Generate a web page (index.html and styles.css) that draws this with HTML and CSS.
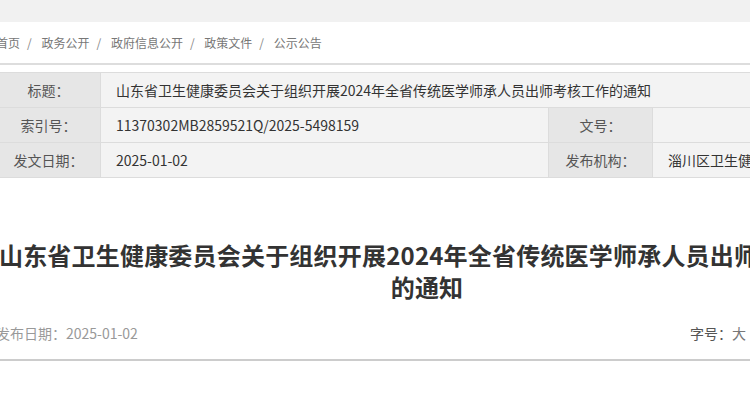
FILE: index.html
```
<!DOCTYPE html>
<html lang="zh-CN">
<head>
    <meta charset="UTF-8">
    <meta name="viewport" content="width=device-width, initial-scale=1.0">
    <title>山东省卫生健康委员会关于组织开展2024年全省传统医学师承人员出师考核工作的通知</title>
    <link rel="stylesheet" href="styles.css">
</head>
<body>
    <div class="top-band"></div>

    <div class="wrap">
        <div class="crumbs">
            <a href="#">首页</a><span class="sep">/</span>
            <a href="#">政务公开</a><span class="sep">/</span>
            <a href="#">政府信息公开</a><span class="sep">/</span>
            <a href="#">政策文件</a><span class="sep">/</span>
            <a href="#">公示公告</a>
        </div>

        <table class="info">
            <colgroup>
                <col class="c-label">
                <col class="c-wide">
                <col class="c-label">
                <col>
            </colgroup>
            <tr>
                <th>标题：</th>
                <td colspan="3">山东省卫生健康委员会关于组织开展2024年全省传统医学师承人员出师考核工作的通知</td>
            </tr>
            <tr>
                <th>索引号：</th>
                <td>11370302MB2859521Q/2025-5498159</td>
                <th>文号：</th>
                <td></td>
            </tr>
            <tr>
                <th>发文日期：</th>
                <td>2025-01-02</td>
                <th>发布机构：</th>
                <td>淄川区卫生健康局</td>
            </tr>
        </table>

        <h1 class="doc-title">山东省卫生健康委员会关于组织开展2024年全省传统医学师承人员出师考核工作的通知</h1>

        <div class="meta">
            <span class="date">发布日期：2025-01-02</span>
            <span class="size">字号：<a href="#">大</a><a href="#">中</a><a href="#">小</a></span>
        </div>
    </div>
</body>
</html>
```

FILE: styles.css
```
body {
    margin: 0;
    font-family: "Noto Sans CJK SC", "Liberation Sans", sans-serif;
    color: #333;
    background: #fff;
    overflow: hidden;
}

a {
    color: inherit;
    text-decoration: none;
}

.top-band {
    height: 22px;
    background-color: #f1f1f1;
}

.wrap {
    width: 862px;
    margin-left: -4px;
}

/* 面包屑 */
.crumbs {
    height: 41px;
    line-height: 42px;
    font-size: 12px;
    color: #777;
    border-bottom: 2px solid #ddd;
    white-space: nowrap;
}

.crumbs .sep {
    padding: 0 7px;
    color: #888;
}

/* 信息表 */
.info {
    width: 100%;
    margin-top: 7px;
    border-collapse: collapse;
    table-layout: fixed;
    font-size: 14px;
}

.info .c-label {
    width: 104px;
}

.info .c-wide {
    width: 448px;
}

.info th,
.info td {
    height: 34px;
    padding: 0;
    border: 1px solid #dcdcdc;
    white-space: nowrap;
    overflow: hidden;
}

.info th {
    font-weight: normal;
    background-color: #e6e6e6;
    color: #555;
    text-align: center;
}

.info td {
    background-color: #f3f3f3;
    padding-left: 15px;
    text-align: left;
}

/* 标题 */
.doc-title {
    margin: 61px 0 0;
    font-size: 24px;
    line-height: 32px;
    font-weight: bold;
    letter-spacing: 0.2px;
    text-align: center;
    color: #333;
}

.meta {
    display: flex;
    justify-content: space-between;
    margin-top: 20px;
    padding: 0 54px 16px 0;
    line-height: 20px;
    font-size: 14px;
    color: #999;
    border-bottom: 2px solid #ccc;
}

.meta .size {
    color: #555;
}

.meta .size a {
    color: #777;
    margin-right: 10px;
}
```
